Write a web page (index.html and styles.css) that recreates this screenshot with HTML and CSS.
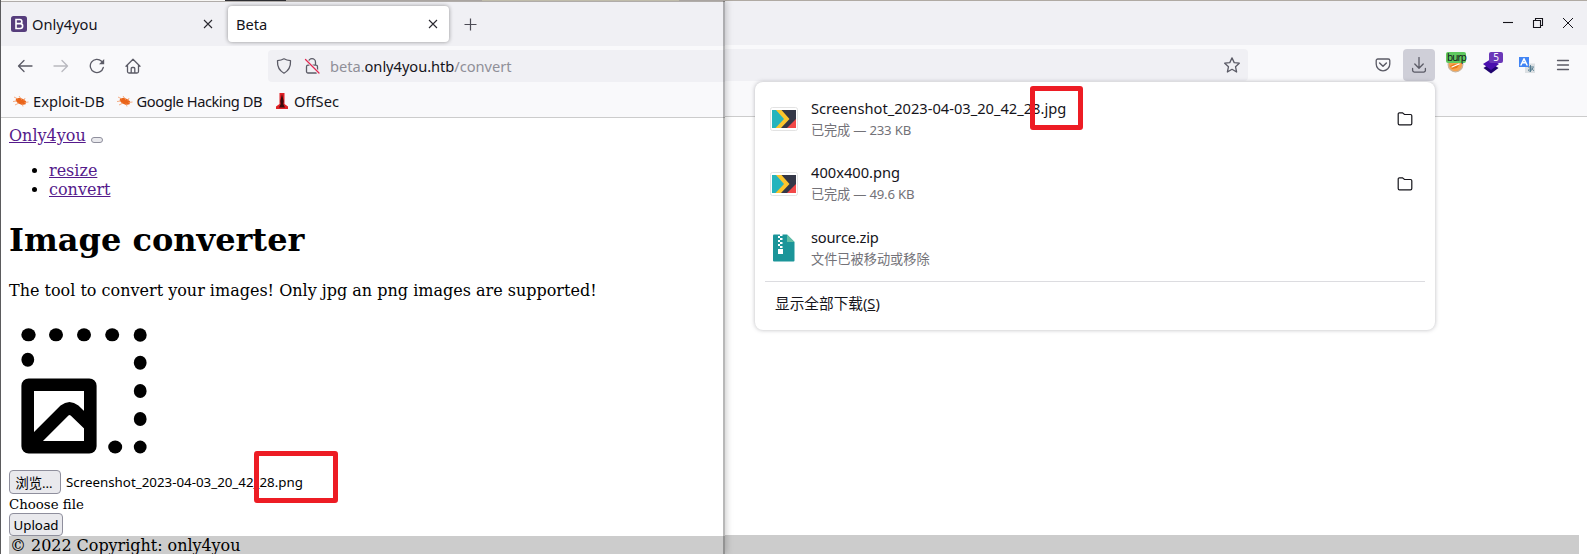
FILE: index.html
```
<!DOCTYPE html>
<html lang="zh-CN">
<head>
<meta charset="utf-8">
<title>Beta</title>
<link rel="stylesheet" href="styles.css">
</head>
<body>
<div class="desktop">
  <section class="window front">
    <div class="strip"><i class="s-light"></i><i class="s-dark"></i><i class="s-gray"></i><i class="s-tan"></i><i class="s-gray last"></i></div>
    <div class="tabs">
      <div class="tab">
        <svg class="fav" width="16" height="16" viewBox="0 0 16 16"><rect width="16" height="16" rx="2.5" fill="#563d7c"/><path d="M5 3.5h3.7a2 2 0 0 1 .2 4.1H5zm0 4.1h4.2a2.3 2.3 0 0 1 0 4.9H5z" fill="none" stroke="#fff" stroke-width="1.6"/></svg>
        <span class="tab-title">Only4you</span>
        <svg class="close" width="10" height="10" viewBox="0 0 10 10"><path d="M1 1l8 8M9 1l-8 8"/></svg>
      </div>
      <div class="tab active">
        <span class="tab-title">Beta</span>
        <svg class="close" width="10" height="10" viewBox="0 0 10 10"><path d="M1 1l8 8M9 1l-8 8"/></svg>
      </div>
      <svg class="plus" width="13" height="13" viewBox="0 0 13 13"><path d="M6.5.5v12M.5 6.5h12"/></svg>
    </div>
    <div class="toolbar">
      <div class="nav">
        <svg width="16" height="16" viewBox="0 0 16 16"><path d="M15 8H2M7 2.5L1.5 8 7 13.5"/></svg>
        <svg class="off" width="16" height="16" viewBox="0 0 16 16"><path d="M1 8h13M9 2.500L14.500 8 9 13.500"/></svg>
        <svg width="16" height="16" viewBox="0 0 16 16"><path d="M14.300 9.500A6.600 6.600 0 1 1 12.600 3.300"/><path d="M15.200 1v5.200H10z" fill="#5b5b66" stroke="none"/></svg>
        <svg width="16" height="16" viewBox="0 0 16 16"><path d="M1 8.300L8 1.200l7 7.100M2.500 7v6.500a1.500 1.500 0 0 0 1.500 1.500h8a1.500 1.500 0 0 0 1.500-1.500V7M6.200 15v-4.500a1 1 0 0 1 1-1h1.600a1 1 0 0 1 1 1V15"/></svg>
      </div>
      <div class="url">
        <svg width="16" height="16" viewBox="0 0 16 16"><path d="M8 .8c2 1.200 4.300 1.700 6.500 1.900.3 5.300-1.500 9.700-6.500 12.500C3 12.400 1.200 8 1.500 2.700 3.700 2.500 6 2 8 .8z"/></svg>
        <svg width="16" height="16" viewBox="0 0 16 16"><path d="M4.500 7V4.200a3.500 3.500 0 0 1 7 0V7M4 7.200h8a1.500 1.500 0 0 1 1.500 1.500v4.800A1.500 1.500 0 0 1 12 15H4a1.500 1.500 0 0 1-1.500-1.500V8.700A1.500 1.500 0 0 1 4 7.200z"/><path d="M1.500 1.500L15 15" stroke="#f0f0f4" stroke-width="3"/><path d="M1.500 1.500L15 15" stroke="#e22850" stroke-width="1.300"/></svg>
        <span class="address">beta.<b>only4you.htb</b>/convert</span>
      </div>
    </div>
    <div class="bookmarks">
      <div class="bm"><svg width="16" height="16" viewBox="0 0 16 16"><path d="M3 5.500l4-.8 3.500 1.500 2.600 2-.5 3-3.600.8-4-1.800-2.300-2.500z" fill="#ea6419"/><path d="M1 4l4 2M0 8.500l4-.5M2 12l4-2M6 3l3 4M10 13.500l-1-3M15.500 9l-4 .5M12 5l-1 3" stroke="#f49b67" fill="none" stroke-width=".8"/></svg><span>Exploit-DB</span></div>
      <div class="bm"><svg width="16" height="16" viewBox="0 0 16 16"><path d="M3 5.500l4-.8 3.500 1.500 2.600 2-.5 3-3.600.8-4-1.800-2.300-2.500z" fill="#ea6419"/><path d="M1 4l4 2M0 8.500l4-.5M2 12l4-2M6 3l3 4M10 13.500l-1-3M15.500 9l-4 .5M12 5l-1 3" stroke="#f49b67" fill="none" stroke-width=".8"/></svg><span class="tight">Google Hacking DB</span></div>
      <div class="bm"><svg width="16" height="16" viewBox="0 0 16 16"><path d="M5.500 0h5v11l3.500 2.500V16H2v-2.500L5.500 11z" fill="#e02126"/><path d="M8 1l1.700 7-.4 3 1.700 3.500H5L6.700 11l-.4-3z" fill="#3a0a0c"/></svg><span>OffSec</span></div>
    </div>
    <main class="page">
      <nav><a class="link">Only4you</a> <button class="toggler"></button>
        <ul><li><a class="link">resize</a></li><li><a class="link">convert</a></li></ul>
      </nav>
      <h1>Image converter</h1>
      <p>The tool to convert your images! Only jpg an png images are supported!</p>
      <svg class="resize-art" width="150" height="150" viewBox="0 0 150 150">
        <g><ellipse cx="19.500" cy="19.800" rx="7.200" ry="6.500"/><ellipse cx="47" cy="19.800" rx="7" ry="6.500"/><ellipse cx="75" cy="19.800" rx="7" ry="6.500"/><ellipse cx="103.200" cy="19.800" rx="7" ry="6.500"/><ellipse cx="131.200" cy="20" rx="6.500" ry="6.800"/><ellipse cx="18.800" cy="44.700" rx="6.400" ry="7"/><ellipse cx="131.200" cy="47.700" rx="6.400" ry="7"/><ellipse cx="131.200" cy="76" rx="6.400" ry="7"/><ellipse cx="131.200" cy="104" rx="6.400" ry="7"/><ellipse cx="131.200" cy="132" rx="6.400" ry="6.500"/><ellipse cx="106.200" cy="132" rx="7" ry="6.500"/></g>
        <rect x="18.700" y="69.700" width="62.600" height="62.600" rx="1"/>
        <path d="M20 131L55.500 95.500Q60.500 91.500 65.500 95.500L80 109.500"/>
      </svg>
      <form>
        <div class="file"><button type="button" class="btn browse">浏览…</button><span>Screenshot_2023-04-03_20_42_28.png</span></div>
        <label>Choose file</label>
        <button type="button" class="btn upload">Upload</button>
      </form>
      <footer>© 2022 Copyright: only4you</footer>
    </main>
  </section>

  <section class="window back">
    <div class="titlebar">
      <svg width="12" height="12" viewBox="0 0 12 12"><path d="M1 5.500h10"/></svg>
      <svg width="12" height="12" viewBox="0 0 12 12"><path d="M1.500 3.500h7v7h-7zM3.500 3V1.500h7v7H9"/></svg>
      <svg width="12" height="12" viewBox="0 0 12 12"><path d="M1 1l10 10M11 1L1 11" stroke-width="1"/></svg>
    </div>
    <div class="toolbar">
      <div class="url tail"><svg width="16" height="16" viewBox="0 0 16 16"><path d="M8 .9l2.200 4.700 5.100.6-3.800 3.500 1.100 5.300L8 12.300 3.400 15l1.100-5.300L.7 6.200l5.100-.6z"/></svg></div>
      <div class="actions">
        <svg width="16" height="16" viewBox="0 0 16 16"><path d="M2.800 2h10.400a1.600 1.600 0 0 1 1.600 1.600V7A6.800 6.800 0 0 1 1.200 7V3.600A1.600 1.600 0 0 1 2.800 2z"/><path d="M4.600 6L8 9.200 11.400 6" stroke-width="1.500"/></svg>
        <div class="dl"><svg width="16" height="16" viewBox="0 0 16 16"><path d="M8 .5v10.300M3.800 7L8 11.200 12.200 7M1.600 11.500v1.800A1.800 1.800 0 0 0 3.400 15.100h9.200a1.800 1.800 0 0 0 1.800-1.800v-1.800"/></svg></div>
        <div class="ext"><svg width="18" height="18" viewBox="0 0 18 18"><circle cx="9.500" cy="8.500" r="7.300" fill="#f7a24d" stroke="#c9b49b" stroke-width="1.300"/><path d="M4 10l4-2 5 1-2 3-5 1z" fill="#e97917" stroke="none"/><path d="M6 11l7-3" stroke="#fff"/></svg><span class="badge burp">burp</span></div>
        <div class="ext"><svg width="18" height="18" viewBox="0 0 18 18"><path d="M1.500 12L9 7l7.500 5L9 17.500z" fill="#20046f" stroke="none"/><path d="M1 8l8-5 8 5-8 6z" fill="#4a0fae" stroke="none"/></svg><span class="badge count">5</span></div>
        <svg width="16" height="16" viewBox="0 0 16 16"><rect x="6" y="6.500" width="10" height="9.500" fill="#dce0e3" stroke="none"/><path d="M9.500 10h5M11.500 8.500v6M14 11c-1 3-4.500 4-4.500 2.200s5-2.200 5 .3" stroke="#527b90" stroke-width="1"/><path d="M0 0h10v10H0z" fill="#4285f4" stroke="none"/><path d="M2 8L5 1.800 8 8M3 5.800h4" stroke="#fff" stroke-width="1.500"/></svg>
        <svg width="16" height="16" viewBox="0 0 16 16"><path d="M2.500 3.500h11M2.500 8h11M2.500 12.500h11"/></svg>
      </div>
    </div>
    <div class="blank"></div>
    <div class="content"></div>
    <div class="foot"></div>
    <aside class="panel">
      <div class="item">
        <svg class="thumb" width="28" height="24" viewBox="0 0 28 24"><rect x=".5" y=".5" width="27" height="23" rx="2" fill="#fff" stroke="#e3e3e3"/><path d="M2 3h24v18H2z" fill="#343747"/><path d="M26 12v9H17z" fill="#f24848"/><path d="M2 3h5l8 9-9 9H2z" fill="#25b4bd"/><path d="M6 3h5.500l8 9-8.500 9H5.500l8.500-9z" fill="#fcc52d"/></svg>
        <div class="info"><div class="name">Screenshot_2023-04-03_20_42_28.jpg</div><div class="sub size">已完成 — 233 KB</div></div>
        <svg class="folder" width="16" height="16" viewBox="0 0 16 16"><path d="M1.200 12.500V3.200a1.300 1.300 0 0 1 1.300-1.400h3l2 1.700h6a1.300 1.300 0 0 1 1.300 1.300v7.700a1.300 1.300 0 0 1-1.300 1.300h-11a1.300 1.300 0 0 1-1.300-1.300z"/></svg>
      </div>
      <div class="item">
        <svg class="thumb" width="28" height="24" viewBox="0 0 28 24"><rect x=".5" y=".5" width="27" height="23" rx="2" fill="#fff" stroke="#e3e3e3"/><path d="M2 3h24v18H2z" fill="#343747"/><path d="M26 12v9H17z" fill="#f24848"/><path d="M2 3h5l8 9-9 9H2z" fill="#25b4bd"/><path d="M6 3h5.500l8 9-8.500 9H5.500l8.500-9z" fill="#fcc52d"/></svg>
        <div class="info"><div class="name">400x400.png</div><div class="sub size">已完成 — 49.6 KB</div></div>
        <svg class="folder" width="16" height="16" viewBox="0 0 16 16"><path d="M1.200 12.500V3.200a1.300 1.300 0 0 1 1.300-1.400h3l2 1.700h6a1.300 1.300 0 0 1 1.300 1.300v7.700a1.300 1.300 0 0 1-1.300 1.300h-11a1.300 1.300 0 0 1-1.300-1.300z"/></svg>
      </div>
      <div class="item">
        <svg class="thumb" width="28" height="28" viewBox="0 0 28 28"><path d="M4 .5h13l7.500 7.500v18.500a1 1 0 0 1-1 1H4a1 1 0 0 1-1-1v-25a1 1 0 0 1 1-1z" fill="#1b9599"/><path d="M17 .5L24.500 8H17z" fill="#63bfa6"/><path d="M8 2h2v2H8zM10 4h2.500v2H10zM8 6h2v2H8zM10 8h2.500v2H10zM8 10h2v2H8zM10 12h2.500v2H10zM8 15h5v5H8zM10 0h2.500v2H10z" fill="#fff"/></svg>
        <div class="info"><div class="name zip">source.zip</div><div class="sub">文件已被移动或移除</div></div>
      </div>
      <div class="all">显示全部下载(<u>S</u>)</div>
    </aside>
  </section>
  <div class="mark mark-png"></div>
  <div class="mark mark-jpg"></div>
</div>
</body>
</html>
```

FILE: styles.css
```
* { box-sizing: border-box; }
body { margin: 0; background: #fff; overflow: hidden; }
svg { display: block; flex: none; fill: none; }
.desktop {
  position: relative; display: flex; width: 1587px; height: 554px; overflow: hidden;
  font: 14.67px/20px "Noto Sans", "Noto Sans CJK SC", sans-serif; color: #15141a;
}
.window { display: flex; flex-direction: column; height: 554px; background: #fff; }
.front { position: relative; z-index: 2; width: 725px; border-left: 1px solid #5b5b5d; box-shadow: 1px 0 7px rgba(0,0,0,.22); }
.front::after { content: ""; position: absolute; top: 1px; right: 0; bottom: 0; width: 2px; background: rgba(0,0,0,.28); }
.back { position: relative; width: 862px; border-top: 1px solid #b0aaa3; }

.strip { display: flex; height: 2px; border-bottom: 1px solid #b0aca9; }
.s-light { width: 224px; background: #f7f6f4; }
.s-dark { width: 61px; background: #2f2f33; }
.s-gray { width: 196px; background: #aaa5a1; }
.s-tan { width: 197px; background: #c0bcaa; }
.last { flex: 1; }

.tabs { display: flex; align-items: center; height: 44px; background: #f0f0f4; }
.tab { display: flex; align-items: center; width: 223px; height: 36px; padding: 0 11px 0 10px; }
.tab.active { margin-left: 4px; width: 221px; padding: 0 11px 0 8px; background: #fff; border-radius: 4px; box-shadow: 0 0 4px rgba(0,0,0,.4); }
.fav { margin-right: 5px; }
.tab-title { flex: 1; }
.close { stroke: #2a2930; stroke-width: 1.1; }
.plus { margin-left: 15px; stroke: #4c4b55; stroke-width: 1.2; }

.toolbar { display: flex; align-items: center; height: 40px; background: #f9f9fb; }
.toolbar svg { stroke: #5b5b66; stroke-width: 1.3; stroke-linecap: round; stroke-linejoin: round; }
.nav { display: flex; gap: 20px; width: 267px; padding-left: 16px; }
.nav .off { opacity: .4; }
.url { display: flex; align-items: center; flex: 1; height: 32px; padding-left: 8px; gap: 12px; background: #f0f0f4; border-radius: 4px 0 0 4px; }
.address { margin-left: -2px; letter-spacing: -.04px; color: #8f8f98; }
.address b { font-weight: 400; color: #15141a; }

.bookmarks { display: flex; gap: 12px; height: 32px; padding: 0 0 2px 12px; align-items: center; background: #f9f9fb; border-bottom: 1px solid #ccc; }
.bm { display: flex; align-items: center; gap: 4px; }
.tight { letter-spacing: -.45px; }

.page { flex: 1; padding: 8px 0 0 8px; font: 16px "DejaVu Serif", serif; color: #000; }
.link { color: #551a8b; text-decoration: underline; }
.toggler { width: 12px; height: 6px; padding: 0; background: #e9e9ed; border: 1px solid #8f8f9d; border-radius: 3px; vertical-align: -1px; }
.page ul { margin: 16px 0 0; padding-left: 40px; }
.page li, .page nav { line-height: 19px; }
.page h1 { margin: 22px 0; font-size: 32px; line-height: 38px; }
.page p { margin: 0 0 15px; line-height: 19px; }
.resize-art path, .resize-art rect { stroke: #000; stroke-width: 12.6; }
.resize-art rect { stroke-linejoin: round; }
.resize-art g { fill: #000; }
.file { display: flex; align-items: center; gap: 5px; height: 24px; margin-top: 5px; font: 13.33px "Noto Sans", sans-serif; }
.btn { padding: 0; border: 1px solid #8f8f9d; border-radius: 4px; background: #e9e9ed; color: #000; font: 13.33px "Noto Sans", "Noto Sans CJK SC", sans-serif; }
.browse { width: 52px; height: 24px; padding-right: 2px; }
.upload { display: block; width: 54px; height: 23px; padding-top: 1px; }
.page label { display: block; height: 19px; font-size: 13.33px; line-height: 21px; }
.page footer { height: 18px; padding-left: 1px; letter-spacing: -.04px; line-height: 19px; background: #ccc; overflow: hidden; }

.titlebar { display: flex; align-items: center; justify-content: flex-end; gap: 18px; height: 44px; padding-right: 13px; background: #f0f0f4; }
.titlebar svg { stroke: #15141a; stroke-width: 1.1; }
.url.tail { flex: none; width: 523px; justify-content: flex-end; padding-right: 8px; border-radius: 0 4px 4px 0; }
.actions { display: flex; align-items: center; margin-left: auto; padding-right: 16px; gap: 20px; }
.dl { display: grid; place-items: center; width: 32px; height: 32px; margin: 0 -8px; background: #cfcfd8; border-radius: 4px; }
.ext { position: relative; width: 18px; margin: 0 -1px; }
.badge { position: absolute; height: 11px; top: -4px; border-radius: 2px; font-size: 10px; line-height: 11px; }
.burp { left: 0; width: 20px; padding-left: 1px; background: #5fc95f; color: #15141a; letter-spacing: -.9px; }
.count { left: 7px; width: 14px; text-align: center; background: #6b38b8; color: #fff; }
.blank { height: 32px; background: #f9f9fb; border-bottom: 1px solid #ccc; }
.content { flex: 1; }
.foot { height: 19px; margin-right: 8px; background: #ccc; }

.panel { position: absolute; left: 30px; top: 81px; width: 680px; height: 248px; padding: 5px 10px; background: #fff; border-radius: 8px; box-shadow: 0 0 4px rgba(58,57,68,.35); }
.item { display: flex; align-items: center; height: 64.5px; padding: 0 12px 0 5px; }
.thumb { width: 28px; margin-right: 13px; }
.info { flex: 1; }
.name { line-height: 21px; }
.zip { letter-spacing: -.2px; }
.sub { color: #737278; font-size: 13.2px; line-height: 22px; }
.size { letter-spacing: -.2px; }
.all { height: 45px; padding-left: 10px; border-top: 1px solid #dcdce0; line-height: 43px; }
.folder { stroke: #15141a; stroke-width: 1.2; }

.mark { position: absolute; z-index: 5; border: 5px solid #ed1c24; border-radius: 3px; }
.mark-png { left: 254px; top: 451px; width: 84px; height: 52px; }
.mark-jpg { left: 1030px; top: 86px; width: 53px; height: 44px; }
```
